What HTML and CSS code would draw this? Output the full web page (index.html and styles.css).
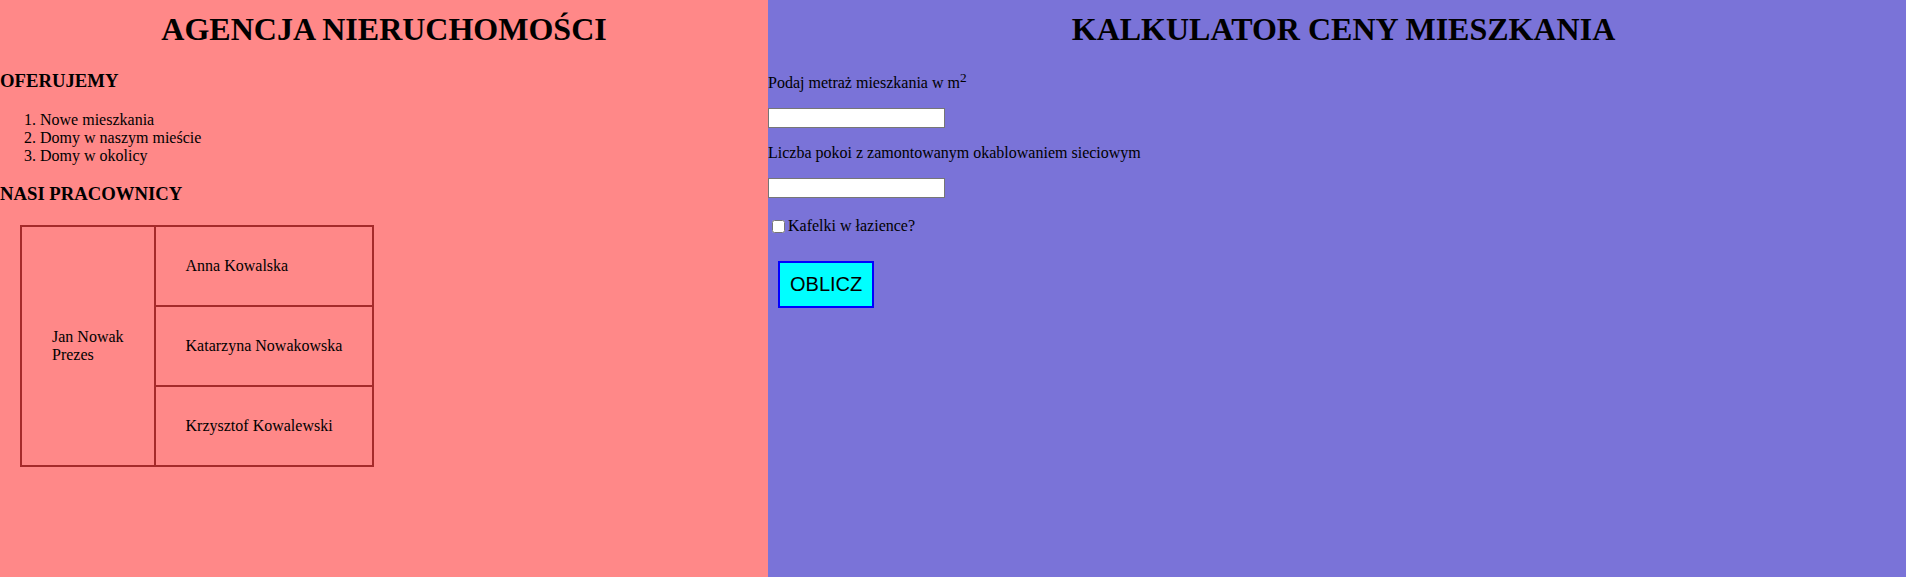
FILE: index.html
```html
<!DOCTYPE html>
<html lang="pl">
<head>
<meta charset="utf-8">
<title>Agencja nieruchomości</title>
<link rel="stylesheet" href="styles.css">
</head>
<body>
<div class="page">
  <section class="agency">
    <h1 class="title">AGENCJA NIERUCHOMOŚCI</h1>
    <h3 class="subtitle">OFERUJEMY</h3>
    <ol class="offer">
      <li>Nowe mieszkania</li>
      <li>Domy w naszym mieście</li>
      <li>Domy w okolicy</li>
    </ol>
    <h3 class="subtitle">NASI PRACOWNICY</h3>
    <table class="staff">
      <tr>
        <td rowspan="3">Jan Nowak<br>Prezes</td>
        <td>Anna Kowalska</td>
      </tr>
      <tr>
        <td>Katarzyna Nowakowska</td>
      </tr>
      <tr>
        <td>Krzysztof Kowalewski</td>
      </tr>
    </table>
  </section>
  <section class="calc">
    <h1 class="title calc-title">KALKULATOR CENY MIESZKANIA</h1>
    <p class="label">Podaj metraż mieszkania w m<sup>2</sup></p>
    <input class="field" type="text">
    <p class="label">Liczba pokoi z zamontowanym okablowaniem sieciowym</p>
    <input class="field" type="text">
    <p class="label check-row"><input class="check" type="checkbox">Kafelki w łazience?</p>
    <button class="btn" type="button">OBLICZ</button>
  </section>
</div>
</body>
</html>
```
FILE: styles.css
```css
html, body {
  margin: 0;
  padding: 0;
}

body {
  font-family: "Liberation Serif", "Times New Roman", serif;
  font-size: 16px;
  color: #000;
}

.page {
  display: flex;
  min-height: 100vh;
}

.agency {
  width: 768px;
  flex: none;
  background: #ff8888;
  display: flow-root;
}

.calc {
  flex: 1;
  background: #7a73d8;
  display: flow-root;
}

.title {
  font-size: 32px;
  font-weight: bold;
  text-align: center;
  margin: 11px 0 22px;
}

.calc-title {
  padding-left: 13px;
}

.subtitle {
  font-size: 18.72px;
  font-weight: bold;
  margin: 18.72px 0;
}

.offer {
  margin: 16px 0;
  padding-left: 40px;
}

.staff {
  border-collapse: collapse;
  margin: 20px;
}

.staff td {
  border: 2px solid #a52a2a;
  padding: 30px;
}

.label {
  margin: 16px 0;
}

.field {
  display: block;
  box-sizing: border-box;
  width: 177px;
  height: 20px;
  margin: 16px 0;
  padding: 1px 2px;
  border: 1px solid #767676;
  background: #fff;
  font: 13.33px "Liberation Sans", Arial, sans-serif;
}

.check-row {
  margin-top: 19px;
}

.check {
  width: 13px;
  height: 13px;
  margin: 3px 3px 3px 4px;
  vertical-align: -2px;
}

.btn {
  display: block;
  margin: 25px 10px 0;
  padding: 10px;
  border: 2px solid #0000ff;
  background: #00ffff;
  color: #000;
  font: 20px "Liberation Sans", Arial, sans-serif;
}
```
